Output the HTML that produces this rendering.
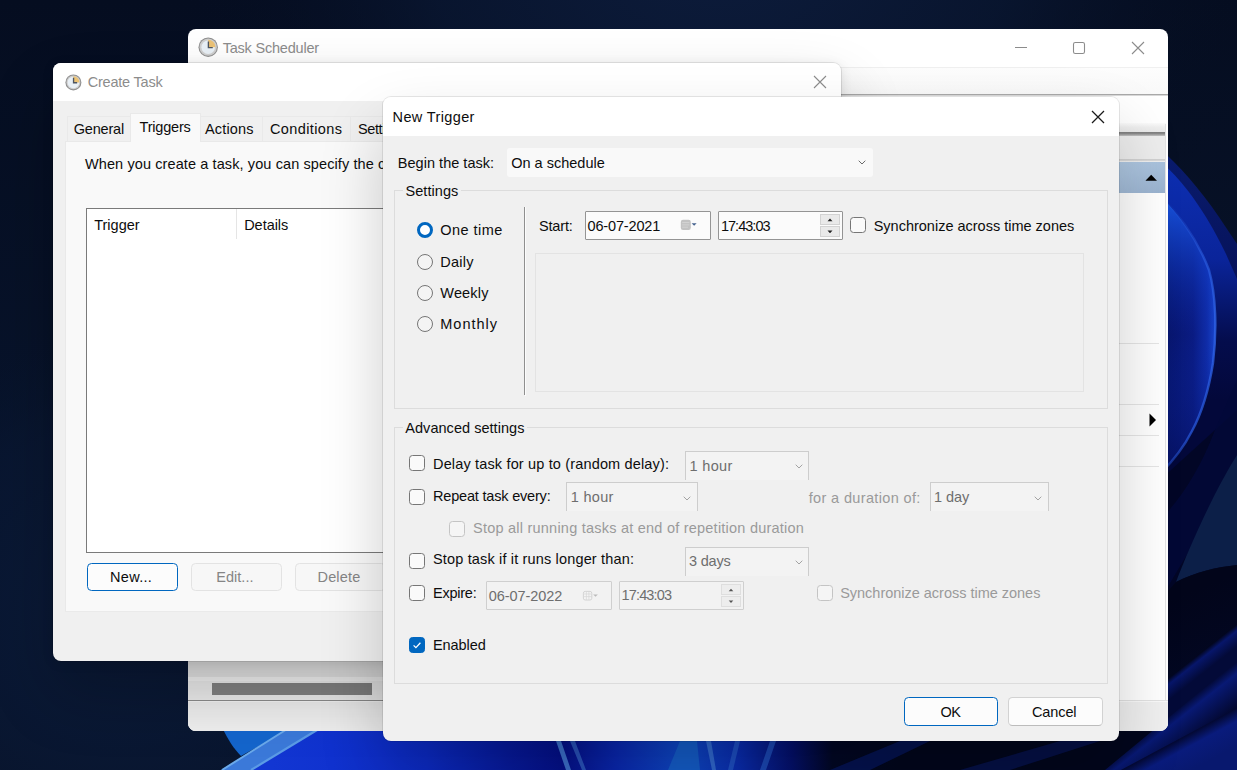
<!DOCTYPE html>
<html lang="en">
<head>
<meta charset="utf-8">
<title>Task Scheduler - New Trigger</title>
<style>
*{box-sizing:border-box;margin:0;padding:0}
html,body{width:1237px;height:770px;overflow:hidden;background:#050e22}
body{position:relative;font-family:"Liberation Sans",sans-serif;font-size:14.5px;color:#0d0d0d}
.abs{position:absolute}
.t{position:absolute;white-space:nowrap;line-height:20px;height:20px}
#wall{position:absolute;left:0;top:0;width:1237px;height:770px}
#ts{position:absolute;left:188px;top:29px;width:980px;height:702px;border-radius:8px;background:#fff;overflow:hidden}
#ct{position:absolute;left:53px;top:63px;width:788px;height:598px;border-radius:8px;background:#f0f0f0;box-shadow:0 32px 64px rgba(0,0,0,.24),0 2px 12px rgba(0,0,0,.10),0 0 0 1px rgba(0,0,0,.09)}
#nt{position:absolute;left:383px;top:97px;width:736px;height:644px;border-radius:8px;background:#f0f0f0;box-shadow:0 32px 64px rgba(0,0,0,.20),0 0 0 1px rgba(0,0,0,.09)}
.clip{position:absolute;left:0;top:0;width:100%;height:100%;border-radius:8px;overflow:hidden}
.cb{position:absolute;width:16px;height:16px;border:1px solid #767676;border-radius:3.5px;background:#fafafa}
.cb.off{border-color:#c4c4c4;background:#f5f5f5}
.rd{position:absolute;width:16px;height:16px;border:1px solid #757575;border-radius:50%;background:#f4f4f4}
.btn{position:absolute;border:1px solid #d2d2d2;border-bottom-color:#bcbcbc;border-radius:4.5px;background:#fcfcfc}
.gray{color:#8c8c8c}
.dis{color:#9a9a9a}
.dis2{color:#6e6e6e}
.dis3{color:#858585}
.grp{position:absolute;border:1px solid #dcdcdc}
.gl{position:absolute;background:#f0f0f0;height:4px}
.cmb{position:absolute;border:1px solid #cdcdcd;border-bottom:0;background:#f3f3f3}
.edit{position:absolute;border:1px solid #949494;background:#fbfbfb;border-radius:1px}
.edit.off{border-color:#cfcfcf;background:#f2f2f2}
.spb{position:absolute;background:#e9e9e9;border:1px solid #d2d2d2}
</style>
</head>
<body>
<svg id="wall" viewBox="0 0 1237 770">
<defs>
<linearGradient id="bgv" x1="0" y1="0" x2="0" y2="1">
<stop offset="0" stop-color="#050d20"/><stop offset=".6" stop-color="#08142c"/><stop offset="1" stop-color="#071126"/>
</linearGradient>
<radialGradient id="topglow" cx="720" cy="-120" r="560" gradientUnits="userSpaceOnUse">
<stop offset="0" stop-color="#0e1e40"/><stop offset=".55" stop-color="#0a1834" stop-opacity=".7"/><stop offset="1" stop-color="#050d20" stop-opacity="0"/>
</radialGradient>
<linearGradient id="bot" x1="224" y1="0" x2="900" y2="0" gradientUnits="userSpaceOnUse">
<stop offset="0" stop-color="#1238d2"/><stop offset=".07" stop-color="#1236d2"/><stop offset=".16" stop-color="#1032cf"/>
<stop offset=".3" stop-color="#0c2ac2"/><stop offset=".42" stop-color="#071a9c"/><stop offset=".5" stop-color="#041088"/>
<stop offset=".58" stop-color="#0a27ae"/><stop offset=".68" stop-color="#0e48c4"/><stop offset=".76" stop-color="#0a2cae"/>
<stop offset=".84" stop-color="#04106a"/><stop offset=".9" stop-color="#020724"/><stop offset="1" stop-color="#02061c"/>
</linearGradient>
<linearGradient id="band1" x1="0" y1="150" x2="0" y2="400" gradientUnits="userSpaceOnUse">
<stop offset="0" stop-color="#0a1c6e"/><stop offset=".5" stop-color="#06125a"/><stop offset="1" stop-color="#03083a"/>
</linearGradient>
<linearGradient id="band2" x1="0" y1="165" x2="0" y2="400" gradientUnits="userSpaceOnUse">
<stop offset="0" stop-color="#0d2fb2"/><stop offset=".4" stop-color="#0a249a"/><stop offset=".75" stop-color="#040c4c"/><stop offset="1" stop-color="#03083a"/>
</linearGradient>
<linearGradient id="petal" x1="1168" y1="0" x2="1218" y2="0" gradientUnits="userSpaceOnUse">
<stop offset="0" stop-color="#08166e"/><stop offset=".5" stop-color="#0a1b82"/><stop offset=".78" stop-color="#0f2ca8"/><stop offset="1" stop-color="#1c4cd6"/>
</linearGradient>
<linearGradient id="petalv" x1="0" y1="200" x2="0" y2="470" gradientUnits="userSpaceOnUse">
<stop offset="0" stop-color="#1a58e6" stop-opacity=".9"/><stop offset=".25" stop-color="#1244d4" stop-opacity=".4"/><stop offset=".5" stop-color="#0c2cb0" stop-opacity="0"/><stop offset="1" stop-color="#040c50" stop-opacity=".5"/>
</linearGradient>
<linearGradient id="lowr" x1="1168" y1="600" x2="1237" y2="770" gradientUnits="userSpaceOnUse">
<stop offset="0" stop-color="#02051a"/><stop offset="1" stop-color="#030a2c"/>
</linearGradient>
<linearGradient id="sk1" x1="1200" y1="653" x2="1211" y2="667" gradientUnits="userSpaceOnUse">
<stop offset="0" stop-color="#02051a"/><stop offset=".3" stop-color="#07166a"/><stop offset="1" stop-color="#030a38"/>
</linearGradient>
<linearGradient id="sk2" x1="1200" y1="691" x2="1222" y2="719" gradientUnits="userSpaceOnUse">
<stop offset="0" stop-color="#030a38"/><stop offset=".25" stop-color="#081974"/><stop offset="1" stop-color="#030830"/>
</linearGradient>
<linearGradient id="sk3" x1="1180" y1="738" x2="1196" y2="768" gradientUnits="userSpaceOnUse">
<stop offset="0" stop-color="#030830"/><stop offset=".35" stop-color="#091b7c"/><stop offset="1" stop-color="#08186e"/>
</linearGradient>
<radialGradient id="lglow" cx="120" cy="620" r="330" gradientUnits="userSpaceOnUse">
<stop offset="0" stop-color="#0b1b3a"/><stop offset=".6" stop-color="#091732" stop-opacity=".7"/><stop offset="1" stop-color="#071126" stop-opacity="0"/>
</radialGradient>
<linearGradient id="rimg" x1="0" y1="200" x2="0" y2="474" gradientUnits="userSpaceOnUse">
<stop offset="0" stop-color="#2f63e6" stop-opacity="0"/><stop offset=".2" stop-color="#2f63e6" stop-opacity=".55"/><stop offset=".45" stop-color="#2f63e6" stop-opacity=".8"/><stop offset=".85" stop-color="#2a5ce0" stop-opacity=".7"/><stop offset="1" stop-color="#2a5ce0" stop-opacity=".4"/>
</linearGradient>
</defs>
<rect width="1237" height="770" fill="url(#bgv)"/>
<rect width="1237" height="200" fill="url(#topglow)"/>
<rect x="0" y="280" width="460" height="490" fill="url(#lglow)"/>
<!-- right side bloom -->
<g>
<rect x="1160" y="250" width="77" height="520" fill="#03083a"/>
<path d="M1160 149 C1178 164 1199 188 1219 217 L1237 244 V400 H1160Z" fill="url(#band1)"/>
<path d="M1160 161 C1188 185 1209 219 1226 254 L1237 279 V400 H1160Z" fill="url(#band2)"/>
<path d="M1160 195 C1182 217 1199 244 1209 270 C1216 295 1217 330 1213 363 C1208 395 1199 418 1192 431 C1185 445 1172 462 1160 474Z" fill="url(#petal)"/>
<path d="M1160 195 C1182 217 1199 244 1209 270 C1216 295 1217 330 1213 363 C1208 395 1199 418 1192 431 C1185 445 1172 462 1160 474Z" fill="url(#petalv)"/>
<path d="M1160 480 L1237 410 V770 H1160Z" fill="#020626"/>
<path d="M1160 195 C1182 217 1199 244 1209 270 C1216 295 1217 330 1213 363 C1208 395 1199 418 1192 431 C1185 445 1172 462 1160 474" fill="none" stroke="url(#rimg)" stroke-width="2.4"/>

<path d="M1160 520 C1180 500 1200 470 1215 430 L1237 380 V470 L1160 600Z" fill="#03093a" opacity=".8"/>
<path d="M1237 455 C1215 490 1190 545 1176 582 C1195 572 1218 567 1237 565Z" fill="#0c1f48"/>
<path d="M1160 600 L1176 582 C1195 572 1218 567 1237 565 V770 H1160Z" fill="url(#lowr)"/>
</g>
<!-- bottom bloom -->
<path d="M240 770 L322 722 H1237 V770 Z" fill="url(#bot)"/>
<path d="M222 727 C228 740 234 749 241 756 L294 727 Z" fill="#1465cc"/>
<path d="M290 727 L322 727 L251 770 L221 770 Z" fill="#3b79d9"/>
<path d="M292 726 L222 770" stroke="#6aa9ea" stroke-width="2" fill="none"/>
<path d="M322 727 L251 770" stroke="#5b9be6" stroke-width="2.2" fill="none"/>
<path d="M556 741 L566 770 H571 L561 741Z" fill="#4a86d8" opacity=".8"/>
<path d="M570 741 L582 770 H586 L575 741Z" fill="#3f78d0" opacity=".6"/>
<path d="M680 741 L668 770 H700 L697 741Z" fill="#1662c8" opacity=".8"/>
<path d="M706 741 L712 770 H716 L711 741Z" fill="#4a86d8" opacity=".6"/>
<path d="M735 741 L728 770 H733 L740 741Z" fill="#2a62cc" opacity=".6"/>
<path d="M770 741 L760 770 H766 L776 741Z" fill="#2a62cc" opacity=".6"/>
<path d="M830 770 L900 741 H930 L870 770Z" fill="#071a6e" opacity=".6"/>
<path d="M960 770 L1060 741 H1100 L1010 770Z" fill="#071a6e" opacity=".5"/>
<path d="M1160 685 L1168 679 L1237 624 V690 L1168 745 L1160 751Z" fill="url(#sk1)"/>
<path d="M1105 770 L1168 718 L1237 661 V740 L1200 770 Z" fill="url(#sk2)"/>
<path d="M1119 771 L1237 708 V771Z" fill="url(#sk3)"/>
</svg>
<!-- Task Scheduler window -->
<div id="ts">
<svg class="abs" style="left:9.8px;top:7.8px" width="20.4" height="20.4" viewBox="0 0 21 21">
<circle cx="10.5" cy="10.5" r="10" fill="#8f8f8f"/>
<circle cx="10.5" cy="10.5" r="8.9" fill="#cfcfcf"/>
<circle cx="10.5" cy="10.5" r="7" fill="#e9f0f6"/>
<path d="M10.5 10.5 L10.5 2.9 A7.6 7.6 0 0 1 18.1 10.5 Z" fill="#ebc275"/>
<path d="M10.7 4.6 V10.9 H15.2" fill="none" stroke="#4d5560" stroke-width="1.4"/>
</svg>
<div class="t gray" id="ts-title" style="left:34.70px;top:8.50px;letter-spacing:-0.211px">Task Scheduler</div>
<svg class="abs" style="left:820px;top:8px" width="150" height="24" viewBox="0 0 150 24" fill="none" stroke="#8c8c8c" stroke-width="1.1">
<path d="M7 10.5 H19"/>
<rect x="65.5" y="5.5" width="11" height="11" rx="1.8"/>
<path d="M124 5 L136 17 M136 5 L124 17"/>
</svg>
<div class="abs" style="left:0;top:38px;width:980px;height:1px;background:#f0f0f0"></div>
<div class="abs" style="left:0;top:39px;width:980px;height:26px;background:linear-gradient(#fdfdfd,#f9f9f9)"></div>
<div class="abs" style="left:0;top:65px;width:980px;height:1px;background:#a9a9a9"></div>
<div class="abs" style="left:0;top:66px;width:980px;height:1px;background:#d9d9d9"></div>
<!-- right actions pane (visible strip) -->
<div class="abs" style="left:900px;top:94px;width:78px;height:10px;background:linear-gradient(#fbfbfb,#efefef 40%,#e7e7e7)"></div>
<div class="abs" style="left:900px;top:103px;width:78px;height:4px;background:linear-gradient(#7c7c7c,#8a8a8a 40%,#c4c4c4)"></div>
<div class="abs" style="left:900px;top:107px;width:78px;height:23px;background:#ededed"></div>
<div class="abs" style="left:900px;top:130px;width:78px;height:3px;background:linear-gradient(#cdcdcd,#d8d8d8 50%,#fafafa)"></div>
<div class="abs" style="left:900px;top:133px;width:78px;height:31px;background:linear-gradient(160deg,#b3cbe3 0%,#a9c2dd 45%,#9ab2cf 100%)"></div>
<svg class="abs" style="left:957.2px;top:145px" width="12.4" height="7.2" viewBox="0 0 14 8"><path d="M0.5 7.5 L7 0.8 L13.5 7.5 Z" fill="#000"/></svg>
<div class="abs" style="left:978px;top:95px;width:2px;height:607px;background:#fff"></div>
<div class="abs" style="left:977px;top:95px;width:1px;height:577px;background:#e3e3e3"></div>
<div class="abs" style="left:900px;top:314px;width:71px;height:1px;background:#e6e6e6"></div>
<div class="abs" style="left:900px;top:375px;width:71px;height:1px;background:#e6e6e6"></div>
<div class="abs" style="left:900px;top:406px;width:71px;height:1px;background:#e6e6e6"></div>
<div class="abs" style="left:900px;top:437px;width:71px;height:1px;background:#e6e6e6"></div>
<svg class="abs" style="left:961px;top:384px" width="8" height="14" viewBox="0 0 8 14"><path d="M0.5 0.5 L7 7 L0.5 13.5 Z" fill="#000"/></svg>
<!-- bottom area: h-scrollbar + status bar -->
<div class="abs" style="left:0;top:620px;width:300px;height:28px;background:#ebebeb"></div>
<div class="abs" style="left:0;top:648px;width:300px;height:4px;background:#fafafa"></div>
<div class="abs" style="left:0;top:652px;width:300px;height:20px;background:#f1f1f1"></div>
<div class="abs" style="left:24px;top:654.3px;width:160px;height:12px;background:#858585"></div>
<div class="abs" style="left:0;top:671px;width:980px;height:1px;background:#e2e2e2"></div>
<div class="abs" style="left:0;top:671px;width:300px;height:1px;background:#8f8f8f"></div>
<div class="abs" style="left:0;top:672px;width:980px;height:1px;background:#fafafa"></div>
<div class="abs" style="left:0;top:673px;width:980px;height:29px;background:#f0f0f0"></div>
<div class="abs" style="left:0;top:673px;width:300px;height:29px;background:#f0f0f0"></div>
</div>
<!-- Create Task window -->
<div id="ct"><div class="clip">
<div class="abs" style="left:0;top:0;width:788px;height:38px;background:#fff"></div>
<svg class="abs" style="left:12.2px;top:11.3px" width="16.8" height="16.8" viewBox="0 0 21 21">
<circle cx="10.5" cy="10.5" r="10" fill="#909090"/>
<circle cx="10.5" cy="10.5" r="8.6" fill="#cfcfcf"/>
<circle cx="10.5" cy="10.5" r="7.2" fill="#e9f0f6"/>
<path d="M10.5 10.5 L10.5 2.9 A7.6 7.6 0 0 1 18.1 10.5 Z" fill="#ebc275"/>
<path d="M10.7 4.6 V10.9 H15.2" fill="none" stroke="#4d5560" stroke-width="1.7"/>
</svg>
<svg class="abs" style="left:760px;top:12px" width="14" height="14" viewBox="0 0 14 14" fill="none" stroke="#8c8c8c" stroke-width="1.1"><path d="M1 1 L13 13 M13 1 L1 13"/></svg>
<!-- tabs -->
<div class="abs" style="left:12px;top:77.5px;width:776px;height:471px;background:#f9f9f9;border-left:1px solid #e9e9e9;border-top:1px solid #e9e9e9;border-bottom:1px solid #eaeaea"></div>
<div class="abs" style="left:14px;top:52.5px;width:600px;height:25px;border-top:1px solid #e9e9e9;border-left:1px solid #e9e9e9"></div>
<div class="abs" style="left:147px;top:52.5px;width:1px;height:25px;background:#e9e9e9"></div>
<div class="abs" style="left:209px;top:52.5px;width:1px;height:25px;background:#e9e9e9"></div>
<div class="abs" style="left:297px;top:52.5px;width:1px;height:25px;background:#e9e9e9"></div>
<div class="abs" style="left:77px;top:49.5px;width:71px;height:29px;background:#f9f9f9;border:1px solid #e9e9e9;border-bottom:0"></div>
<!-- list -->
<div class="abs" style="left:33px;top:145px;width:760px;height:345px;background:#fff;border:1px solid #7a7a7a"></div>
<div class="abs" style="left:183px;top:146px;width:1px;height:30px;background:#e5e5e5"></div>
<!-- buttons -->
<div class="btn" style="left:34px;top:500px;width:91px;height:28px;border:1.5px solid #0067c0;border-radius:4.5px"></div>
<div class="btn" style="left:138px;top:500px;width:91px;height:28px;border-color:#e3e3e3;background:#f7f7f7"></div>
<div class="btn" style="left:242px;top:500px;width:91px;height:28px;border-color:#e3e3e3;background:#f7f7f7"></div>
<div class="t gray" id="ct-title" style="left:34.70px;top:8.60px;letter-spacing:-0.211px">Create Task</div>
<div class="t" id="tab1" style="left:20.70px;top:56.40px;letter-spacing:-0.182px">General</div>
<div class="t" id="tab2" style="left:86.60px;top:54.00px;letter-spacing:-0.206px">Triggers</div>
<div class="t" id="tab3" style="left:152.00px;top:56.40px;letter-spacing:0.156px">Actions</div>
<div class="t" id="tab4" style="left:216.90px;top:56.40px;letter-spacing:0.398px">Conditions</div>
<div class="t" id="tab5" style="left:304.90px;top:56.40px;letter-spacing:-0.366px">Settings</div>
<div class="t" id="ct-desc" style="left:32.00px;top:90.60px;letter-spacing:0.102px">When you create a task, you can specify the conditions that will trigger the task.</div>
<div class="t" id="col1" style="left:41.20px;top:152.00px;letter-spacing:0.018px">Trigger</div>
<div class="t" id="col2" style="left:191.20px;top:152.00px;letter-spacing:-0.038px">Details</div>
<div class="t" id="b-new" style="left:57.10px;top:504.30px;letter-spacing:0.301px">New...</div>
<div class="t dis3" id="b-edit" style="left:163.30px;top:504.30px;letter-spacing:0.020px">Edit...</div>
<div class="t dis3" id="b-del" style="left:264.50px;top:504.30px;letter-spacing:0.156px">Delete</div>
</div></div>
<!-- New Trigger dialog -->
<div id="nt"><div class="clip">
<div class="abs" style="left:0;top:0;width:736px;height:39px;background:#fff"></div>
<svg class="abs" style="left:708px;top:13px" width="14" height="14" viewBox="0 0 14 14" fill="none" stroke="#1a1a1a" stroke-width="1.25"><path d="M1 1 L13 13 M13 1 L1 13"/></svg>
<!-- begin the task combo -->
<div class="abs" style="left:124px;top:51px;width:366px;height:29px;background:#f9f9f9;border-radius:3px"></div>
<svg class="abs" style="left:475px;top:63px" width="8" height="5" viewBox="0 0 8 5" fill="none" stroke="#6a6a6a" stroke-width="1"><path d="M0.7 0.7 L4 4 L7.3 0.7"/></svg>
<!-- settings group -->
<div class="grp" style="left:11px;top:93px;width:714px;height:219px"></div>
<div class="gl" style="left:20px;top:91px;width:58px"></div>
<div class="rd" style="left:34px;top:125.3px;border:3.2px solid #0067c0;background:#fff"></div>
<div class="rd" style="left:34px;top:156.6px"></div>
<div class="rd" style="left:34px;top:187.8px"></div>
<div class="rd" style="left:34px;top:219px"></div>
<div class="abs" style="left:141px;top:110px;width:1px;height:188px;background:#8f8f8f"></div>
<div class="abs" style="left:142px;top:110px;width:1px;height:189px;background:#fcfcfc"></div>
<div class="edit" style="left:202px;top:114px;width:126px;height:29px"></div>
<svg class="abs" style="left:297px;top:122px" width="18" height="12" viewBox="0 0 18 12"><rect x=".8" y=".8" width="10" height="10.2" rx="2.2" fill="#c2c2c2"/><path d="M2.2 3.6 H9.4 M2.2 5.9 H9.4 M2.2 8.2 H8" stroke="#d8d8d8" stroke-width=".8"/><path d="M11.6 4.2 H16.6 L14.1 6.8 Z" fill="#44628f"/></svg>
<div class="edit" style="left:335px;top:114px;width:125px;height:29px"></div>
<div class="spb" style="left:437px;top:117px;width:20px;height:11px"></div>
<div class="spb" style="left:437px;top:129px;width:20px;height:11px"></div>
<svg class="abs" style="left:444px;top:121px" width="6" height="16" viewBox="0 0 6 16"><path d="M0.5 3.2 L3 0.6 L5.5 3.2 Z M0.5 12.6 L3 15.2 L5.5 12.6 Z" fill="#222"/></svg>
<div class="cb" style="left:467px;top:120px"></div>
<div class="abs" style="left:152px;top:156px;width:549px;height:139px;border:1px solid #e3e3e3"></div>
<!-- advanced group -->
<div class="grp" style="left:11px;top:330px;width:714px;height:257px"></div>
<div class="gl" style="left:20px;top:328px;width:124px"></div>
<div class="cb" style="left:26px;top:358px"></div>
<div class="cmb" style="left:302px;top:354px;width:124px;height:29px"></div>
<svg class="abs ch" style="left:411.5px;top:367px" width="8" height="5" viewBox="0 0 8 5" fill="none" stroke="#a3a3a3" stroke-width="1"><path d="M0.7 0.7 L4 4 L7.3 0.7"/></svg>
<div class="cb" style="left:26px;top:392px"></div>
<div class="cmb" style="left:183px;top:385px;width:132px;height:29px"></div>
<svg class="abs ch" style="left:300px;top:398.5px" width="8" height="5" viewBox="0 0 8 5" fill="none" stroke="#a3a3a3" stroke-width="1"><path d="M0.7 0.7 L4 4 L7.3 0.7"/></svg>
<div class="cmb" style="left:547px;top:385px;width:119px;height:29px"></div>
<svg class="abs ch" style="left:651px;top:398.5px" width="8" height="5" viewBox="0 0 8 5" fill="none" stroke="#a3a3a3" stroke-width="1"><path d="M0.7 0.7 L4 4 L7.3 0.7"/></svg>
<div class="cb off" style="left:66px;top:423.5px"></div>
<div class="cb" style="left:26px;top:456px"></div>
<div class="cmb" style="left:302px;top:450px;width:124px;height:29px"></div>
<svg class="abs ch" style="left:411.5px;top:463px" width="8" height="5" viewBox="0 0 8 5" fill="none" stroke="#a3a3a3" stroke-width="1"><path d="M0.7 0.7 L4 4 L7.3 0.7"/></svg>
<div class="cb" style="left:26px;top:488px"></div>
<div class="edit off" style="left:103px;top:484px;width:126px;height:29px"></div>
<svg class="abs" style="left:199px;top:492.5px" width="18" height="12" viewBox="0 0 18 12"><rect x="1.4" y="1.4" width="8.4" height="8.6" rx="1.8" fill="#f4f4f4" stroke="#cfcfcf" stroke-width=".9"/><path d="M2 4 H9.4 M2 6.6 H9.4 M4.4 1.6 V9.8 M6.9 1.6 V9.8" stroke="#d6d6d6" stroke-width=".7"/><path d="M11.2 4.4 H15.8 L13.5 6.8 Z" fill="#b9b9b9"/></svg>
<div class="edit off" style="left:236px;top:484px;width:125px;height:29px"></div>
<div class="spb" style="left:338px;top:487px;width:20px;height:11px;border-color:#dedede;background:#ededed"></div>
<div class="spb" style="left:338px;top:499px;width:20px;height:11px;border-color:#dedede;background:#ededed"></div>
<svg class="abs" style="left:345px;top:491px" width="6" height="16" viewBox="0 0 6 16"><path d="M0.7 3.2 L3 0.8 L5.3 3.2 Z M0.7 12.6 L3 15 L5.3 12.6 Z" fill="#555"/></svg>
<div class="cb off" style="left:434px;top:488px"></div>
<div class="cb" style="left:26px;top:540px;background:#0067c0;border-color:#0067c0"></div>
<svg class="abs" style="left:26px;top:540px" width="16" height="16" viewBox="0 0 16 16" fill="none" stroke="#fff" stroke-width="1.3"><path d="M4.6 8.4 L6.9 10.6 L11.4 5.8"/></svg>
<!-- buttons -->
<div class="btn" style="left:521px;top:600px;width:94px;height:29px;border:1.5px solid #0067c0"></div>
<div class="btn" style="left:625px;top:600px;width:95px;height:29px"></div>
<div class="t" id="nt-title" style="left:9.60px;top:10.10px;letter-spacing:0.363px">New Trigger</div>
<div class="t" id="begin" style="left:14.80px;top:55.90px;letter-spacing:0.027px">Begin the task:</div>
<div class="t" id="sched" style="left:128.20px;top:55.90px;letter-spacing:0.007px">On a schedule</div>
<div class="t" id="settings" style="left:22.50px;top:83.60px;letter-spacing:0.056px">Settings</div>
<div class="t" id="r1" style="left:57.30px;top:123.30px;letter-spacing:0.465px">One time</div>
<div class="t" id="r2" style="left:57.30px;top:154.60px;letter-spacing:0.266px">Daily</div>
<div class="t" id="r3" style="left:57.30px;top:185.80px;letter-spacing:0.164px">Weekly</div>
<div class="t" id="r4" style="left:57.30px;top:217.00px;letter-spacing:0.970px">Monthly</div>
<div class="t" id="start" style="left:155.90px;top:119.00px;letter-spacing:-0.131px">Start:</div>
<div class="t" id="date1" style="left:204.50px;top:119.00px;letter-spacing:-0.152px">06-07-2021</div>
<div class="t" id="time1" style="left:337.90px;top:119.00px;letter-spacing:-0.965px">17:43:03</div>
<div class="t" id="sync1" style="left:490.70px;top:119.00px;letter-spacing:-0.003px">Synchronize across time zones</div>
<div class="t" id="adv" style="left:22.30px;top:321.30px;letter-spacing:0.037px">Advanced settings</div>
<div class="t" id="delay" style="left:50.00px;top:356.70px;letter-spacing:0.157px">Delay task for up to (random delay):</div>
<div class="t dis2" id="h1" style="left:306.50px;top:358.80px;letter-spacing:0.335px">1 hour</div>
<div class="t" id="repeat" style="left:50.00px;top:389.00px;letter-spacing:-0.189px">Repeat task every:</div>
<div class="t dis2" id="h2" style="left:187.70px;top:390.00px;letter-spacing:0.315px">1 hour</div>
<div class="t dis" id="dur" style="left:425.70px;top:390.70px;letter-spacing:0.359px">for a duration of:</div>
<div class="t dis2" id="d1" style="left:551.10px;top:390.30px;letter-spacing:-0.071px">1 day</div>
<div class="t dis" id="stopall" style="left:90.00px;top:421.00px;letter-spacing:0.229px">Stop all running tasks at end of repetition duration</div>
<div class="t" id="stop" style="left:50.00px;top:452.30px;letter-spacing:0.158px">Stop task if it runs longer than:</div>
<div class="t dis2" id="d3" style="left:306.00px;top:454.40px;letter-spacing:-0.187px">3 days</div>
<div class="t" id="expire" style="left:50.00px;top:486.20px;letter-spacing:-0.240px">Expire:</div>
<div class="t dis2" id="date2" style="left:105.70px;top:488.50px;letter-spacing:-0.064px">06-07-2022</div>
<div class="t dis2" id="time2" style="left:238.60px;top:488.30px;letter-spacing:-0.865px">17:43:03</div>
<div class="t dis" id="sync2" style="left:457.20px;top:485.80px;letter-spacing:-0.017px">Synchronize across time zones</div>
<div class="t" id="enabled" style="left:50.00px;top:537.60px;letter-spacing:-0.086px">Enabled</div>
<div class="t" id="ok" style="left:557.50px;top:605.10px;letter-spacing:-0.653px">OK</div>
<div class="t" id="cancel" style="left:648.90px;top:605.00px;letter-spacing:-0.088px">Cancel</div>
</div></div>
</body>
</html>
